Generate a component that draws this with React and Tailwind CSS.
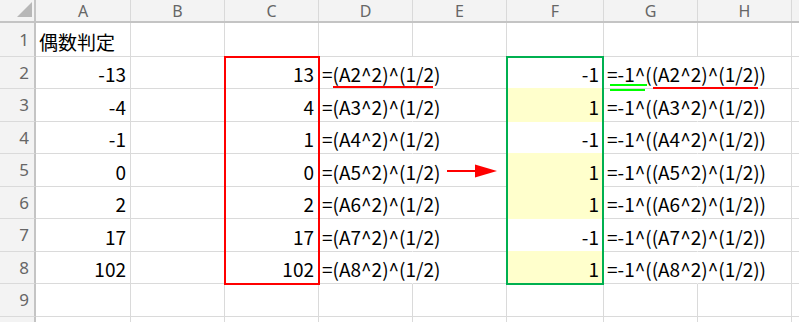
import React from "react";

const COLS = [
  { key: "A", w: "w-[95px]" },
  { key: "B", w: "w-[94px]" },
  { key: "C", w: "w-[94px]" },
  { key: "D", w: "w-[94px]" },
  { key: "E", w: "w-[94px]" },
  { key: "F", w: "w-[97px]" },
  { key: "G", w: "w-[94px]" },
  { key: "H", w: "w-[94px]" },
  { key: "I", w: "w-[94px]", hideLabel: true },
];

const ROW_H = [
  "h-[34px]",
  "h-[32px]",
  "h-[33px]",
  "h-[32px]",
  "h-[33px]",
  "h-[32px]",
  "h-[33px]",
  "h-[32px]",
  "h-[33px]",
  "h-[33px]",
];

const A = [-13, -4, -1, 0, 2, 17, 102];
const F = [-1, 1, -1, 1, 1, -1, 1];

function cellData(r, c) {
  if (r === 1 && c === "A") return { text: "偶数判定", align: "left" };
  if (r >= 2 && r <= 8) {
    const i = r - 2;
    if (c === "A") return { text: String(A[i]), align: "right" };
    if (c === "C") return { text: String(Math.abs(A[i])), align: "right" };
    if (c === "D") return { text: `=(A${r}^2)^(1/2)`, align: "left", overflow: true };
    if (c === "F") return { text: String(F[i]), align: "right", yellow: F[i] === 1 };
    if (c === "G") return { text: `=-1^((A${r}^2)^(1/2))`, align: "left", overflow: true };
  }
  return null;
}

function isYellow(r, c) {
  const d = cellData(r, c);
  return !!(d && d.yellow);
}

function Cell({ r, col }) {
  const d = cellData(r, col.key);
  const yellow = d && d.yellow;
  const overflow = d && d.overflow;
  const nextYellow = isYellow(r + 1, col.key);
  const cls = [
    col.w,
    "shrink-0 h-full flex items-end pb-[5px] whitespace-nowrap text-[19px] leading-none text-black",
    "[font-family:'Noto_Sans_CJK_JP','Noto_Sans',sans-serif]",
    overflow ? "relative z-10" : "",
    yellow ? "bg-[#ffffcc]" : "bg-white",
    overflow ? "border-r border-r-transparent" : yellow ? "border-r border-r-[#ffffcc]" : "border-r border-r-[#dadada]",
    yellow || nextYellow ? "border-b border-b-[#ffffcc]" : "border-b border-b-[#dadada]",
    d && d.align === "right" ? "justify-end pr-[4px]" : "justify-start pl-[3px]",
  ].join(" ");
  return <div className={cls}>{d ? <span>{d.text}</span> : null}</div>;
}

export default function App() {
  return (
    <div className="relative w-[799px] h-[322px] overflow-hidden bg-white">
      {/* column header row */}
      <div className="flex h-[23px] border-b-2 border-b-[#c4c4c4] bg-[#f3f3f3]">
        <div className="w-[36px] shrink-0 h-full border-r-2 border-r-[#c4c4c4] flex items-end justify-end pr-[2px] pb-[3px]">
          <svg width="16" height="16" viewBox="0 0 16 16">
            <polygon points="16,0 16,15 1,15" fill="#b7b7b7" />
          </svg>
        </div>
        {COLS.map((c) => (
          <div
            key={c.key}
            className={`${c.w} shrink-0 h-full flex items-center justify-center border-r border-r-[#d9d9d9] text-[16px] text-[#666666] [font-family:'Noto_Sans',sans-serif]`}
          >
            {c.hideLabel ? "" : c.key}
          </div>
        ))}
      </div>
      {/* body rows */}
      {ROW_H.map((h, idx) => {
        const r = idx + 1;
        return (
          <div key={r} className={`flex ${h}`}>
            <div className="w-[36px] shrink-0 h-full flex items-center justify-end pr-[5px] bg-[#f3f3f3] border-r-2 border-r-[#c4c4c4] border-b border-b-[#dadada] text-[17px] text-[#666666] [font-family:'Noto_Sans',sans-serif]">
              {r < 10 ? r : ""}
            </div>
            {COLS.map((c) => (
              <Cell key={c.key} r={r} col={c} />
            ))}
          </div>
        );
      })}

      {/* annotation shapes drawn over the sheet */}
      <div className="absolute z-20 left-[224px] top-[56px] w-[96px] h-[229px] border-2 border-[#ff0000]" />
      <div className="absolute z-20 left-[506px] top-[56px] w-[98px] h-[229px] border-2 border-[#00b050]" />
      <div className="absolute z-20 left-[333px] top-[86px] w-[100px] h-[2px] bg-[#ff0000]" />
      <div className="absolute z-20 left-[610px] top-[84px] w-[37px] h-[2px] bg-[#00ff00]" />
      <div className="absolute z-20 left-[610px] top-[89px] w-[35px] h-[2px] bg-[#00ff00]" />
      <div className="absolute z-20 left-[653px] top-[87px] w-[105px] h-[2px] bg-[#ff0000]" />
      <svg className="absolute z-20 left-[445px] top-[162px]" width="54" height="18" viewBox="0 0 54 18">
        <line x1="2" y1="9" x2="32" y2="9" stroke="#ff0000" strokeWidth="2" />
        <polygon points="30,2.5 52,9 30,15.5" fill="#ff0000" />
      </svg>
    </div>
  );
}
